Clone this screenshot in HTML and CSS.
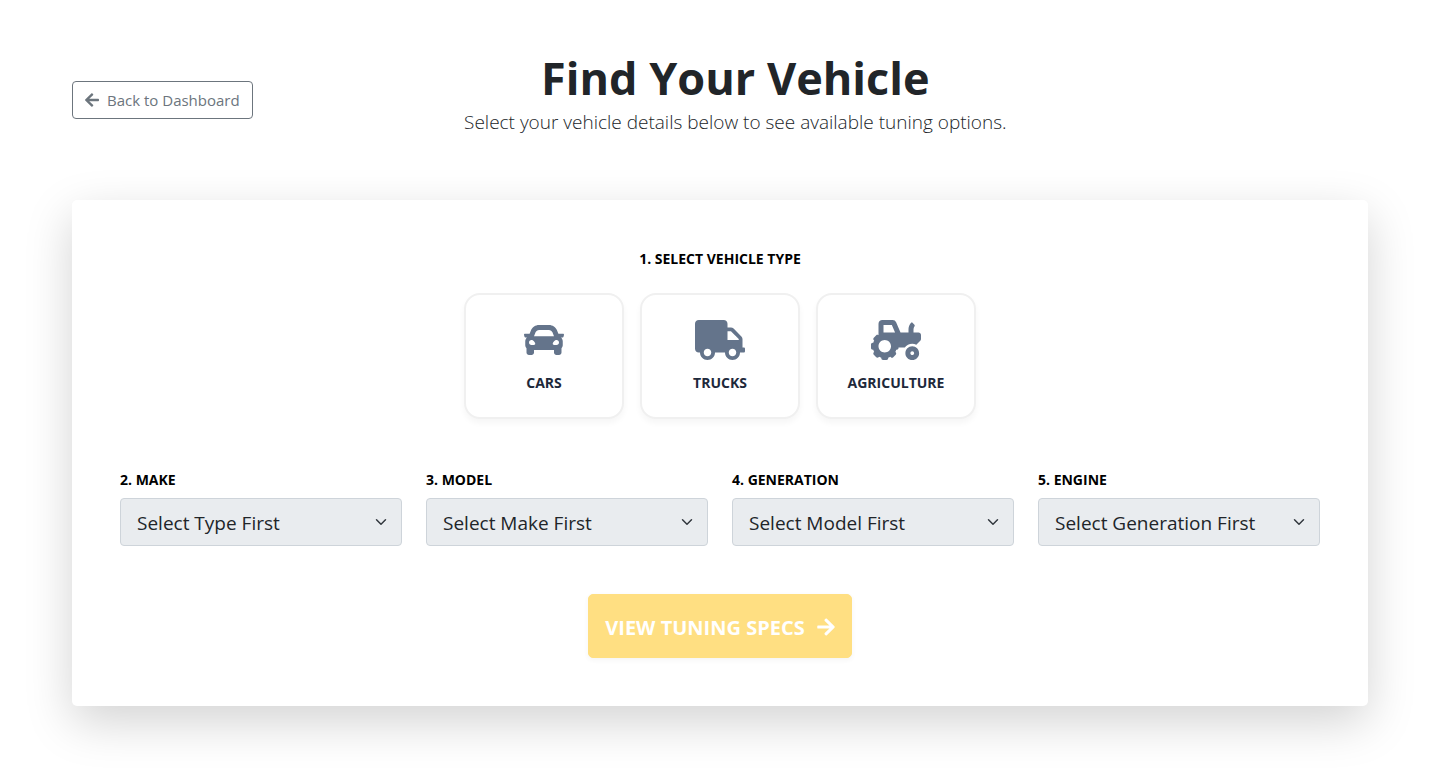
FILE: index.html
```
<!DOCTYPE html>
<html lang="en">
<head>
    <meta charset="UTF-8">
    <title>Find Your Vehicle</title>
    <meta name="viewport" content="width=device-width, initial-scale=1.0">
    <link rel="stylesheet" href="styles.css">
</head>
<body>
    <div class="page">
        <header class="page-header">
            <a href="#" class="btn-back">
                <svg class="icon-back" viewBox="0 0 448 512" aria-hidden="true"><path d="M257.5 445.1l-22.2 22.2c-9.4 9.4-24.6 9.4-33.9 0L7 273c-9.4-9.4-9.4-24.6 0-33.9L201.4 44.7c9.4-9.4 24.6-9.4 33.9 0l22.2 22.2c9.5 9.5 9.3 25-.4 34.3L136.6 216H424c13.3 0 24 10.7 24 24v32c0 13.3-10.7 24-24 24H136.6l120.5 114.8c9.8 9.3 10 24.8.4 34.3z"/></svg>
                Back to Dashboard
            </a>
            <div class="page-title">
                <h1>Find Your Vehicle</h1>
                <p>Select your vehicle details below to see available tuning options.</p>
            </div>
            <div class="header-spacer"></div>
        </header>

        <form class="card">
            <h2 class="form-label type-label">1. Select Vehicle Type</h2>
            <div class="type-list">
                <button type="button" class="type-card">
                    <svg viewBox="0 0 512 512" aria-hidden="true"><path d="M499.99 176h-59.87l-16.64-41.6C406.38 91.63 365.57 64 319.5 64h-127c-46.06 0-86.88 27.63-103.99 70.4L71.87 176H12.01C4.2 176-1.53 183.34.37 190.91l6 24C7.7 220.25 12.5 224 18.01 224h20.07C24.65 235.73 16 252.78 16 272v48c0 16.12 6.16 30.67 16 41.93V416c0 17.67 14.33 32 32 32h32c17.67 0 32-14.33 32-32v-32h256v32c0 17.67 14.33 32 32 32h32c17.67 0 32-14.33 32-32v-54.07c9.84-11.25 16-25.8 16-41.93v-48c0-19.22-8.65-36.27-22.07-48H494c5.51 0 10.31-3.75 11.64-9.09l6-24c1.89-7.57-3.84-14.91-11.65-14.91zm-352.06-17.83c7.29-18.22 24.94-30.17 44.57-30.17h127c19.63 0 37.28 11.95 44.57 30.17L384 208H128l19.93-49.83zM96 319.8c-19.2 0-32-12.76-32-31.9S76.8 256 96 256s48 28.71 48 47.85-28.8 15.95-48 15.95zm320 0c-19.2 0-48 3.19-48-15.95S396.8 256 416 256s32 12.76 32 31.9-12.8 31.9-32 31.9z"/></svg>
                    <span>Cars</span>
                </button>
                <button type="button" class="type-card">
                    <svg viewBox="0 0 640 512" aria-hidden="true"><path d="M624 352h-16V243.9c0-12.7-5.1-24.9-14.1-33.9L494 110.1c-9-9-21.2-14.1-33.9-14.1H416V48c0-26.5-21.5-48-48-48H48C21.5 0 0 21.5 0 48v320c0 26.5 21.5 48 48 48h16c0 53 43 96 96 96s96-43 96-96h128c0 53 43 96 96 96s96-43 96-96h48c8.8 0 16-7.2 16-16v-32c0-8.8-7.2-16-16-16zM160 464c-26.5 0-48-21.5-48-48s21.5-48 48-48 48 21.5 48 48-21.5 48-48 48zm320 0c-26.5 0-48-21.5-48-48s21.5-48 48-48 48 21.5 48 48-21.5 48-48 48zm80-208H416V144h44.1l99.9 99.9V256z"/></svg>
                    <span>Trucks</span>
                </button>
                <button type="button" class="type-card">
                    <svg viewBox="0 0 640 512" aria-hidden="true"><path d="M528 336c-48.6 0-88 39.4-88 88s39.4 88 88 88 88-39.4 88-88-39.4-88-88-88zm0 112c-13.23 0-24-10.77-24-24s10.77-24 24-24 24 10.77 24 24-10.77 24-24 24zm80-288h-64v-40.2c0-14.12 4.7-27.76 13.15-38.84 4.42-5.8 3.55-14.06-1.32-19.49L534.2 37.3c-6.66-7.45-18.32-6.92-24.7.78C490.58 60.9 480 89.81 480 119.8V160H377.67L321.58 29.14A47.914 47.914 0 0 0 277.45 0H144c-26.47 0-48 21.53-48 48v146.52c-8.63-6.73-20.96-6.46-28.89 1.47L36 227.1c-8.59 8.59-8.59 22.52 0 31.11l5.06 5.06c-4.99 9.26-8.96 18.82-11.91 28.72H22c-12.15 0-22 9.85-22 22v44c0 12.15 9.85 22 22 22h7.14c2.96 9.91 6.92 19.46 11.91 28.73l-5.06 5.06c-8.59 8.59-8.59 22.52 0 31.11L67.1 476c8.59 8.59 22.52 8.59 31.11 0l5.06-5.06c9.26 4.99 18.82 8.96 28.72 11.91V490c0 12.15 9.85 22 22 22h44c12.15 0 22-9.85 22-22v-7.14c9.9-2.95 19.46-6.92 28.72-11.91l5.06 5.06c8.59 8.59 22.52 8.59 31.11 0l31.11-31.11c8.59-8.59 8.59-22.52 0-31.11l-5.06-5.06c4.99-9.26 8.96-18.82 11.91-28.72H330c12.15 0 22-9.85 22-22v-6h80.54c21.91-28.99 56.32-48 95.46-48 18.64 0 36.07 4.61 51.8 12.2l50.82-50.82c6-6 9.37-14.14 9.37-22.63V192c.01-17.67-14.32-32-31.99-32zM176 416c-44.18 0-80-35.82-80-80s35.82-80 80-80 80 35.82 80 80-35.82 80-80 80zm22-256h-38V64h106.89l41.15 96H198z"/></svg>
                    <span>Agriculture</span>
                </button>
            </div>

            <div class="field-row">
                <div class="field">
                    <label class="form-label" for="make">2. Make</label>
                    <select id="make" class="form-select" disabled>
                        <option>Select Type First</option>
                    </select>
                </div>
                <div class="field">
                    <label class="form-label" for="model">3. Model</label>
                    <select id="model" class="form-select" disabled>
                        <option>Select Make First</option>
                    </select>
                </div>
                <div class="field">
                    <label class="form-label" for="generation">4. Generation</label>
                    <select id="generation" class="form-select" disabled>
                        <option>Select Model First</option>
                    </select>
                </div>
                <div class="field">
                    <label class="form-label" for="engine">5. Engine</label>
                    <select id="engine" class="form-select" disabled>
                        <option>Select Generation First</option>
                    </select>
                </div>
            </div>

            <button type="submit" class="btn-view" disabled>
                View Tuning Specs
                <svg class="icon-view" viewBox="0 0 448 512" aria-hidden="true"><path d="M190.5 66.9l22.2-22.2c9.4-9.4 24.6-9.4 33.9 0L441 239c9.4 9.4 9.4 24.6 0 33.9L246.6 467.3c-9.4 9.4-24.6 9.4-33.9 0l-22.2-22.2c-9.5-9.5-9.3-25 .4-34.3L311.4 296H24c-13.3 0-24-10.7-24-24v-32c0-13.3 10.7-24 24-24h287.4L190.9 101.2c-9.8-9.3-10-24.8-.4-34.3z"/></svg>
            </button>
        </form>
    </div>
</body>
</html>
```
FILE: styles.css
```
:root {
    --text-dark: #212529;
    --grey: #6c757d;
    --slate: #64748b;
    --navy: #1e293b;
    --yellow: #ffc107;
}

* {
    box-sizing: border-box;
}

body {
    margin: 0;
    min-height: 100vh;
    background-color: #fff;
    color: var(--text-dark);
    font-family: 'Segoe UI', 'Open Sans', 'Noto Sans', sans-serif;
    font-size: 16px;
    line-height: 24px;
}

svg {
    fill: currentColor;
}

.page {
    padding: 48px 5%;
}

/* Header */
.page-header {
    display: flex;
    justify-content: space-between;
    align-items: center;
    margin-bottom: 48px;
}

.btn-back {
    display: flex;
    align-items: center;
    gap: 8px;
    height: 38px;
    padding: 0 12px;
    border: 1px solid var(--grey);
    border-radius: 4px;
    color: var(--grey);
    font-size: 15px;
    text-decoration: none;
}

.icon-back {
    width: 14px;
    height: 16px;
}

.page-title {
    text-align: center;
}

.page-title h1 {
    margin: 0;
    font-size: 45px;
    font-weight: 700;
    line-height: 60px;
}

.page-title p {
    margin: 0 0 16px;
    font-size: 19px;
    font-weight: 300;
    line-height: 28px;
}

.header-spacer {
    width: 150px;
}

/* Form card */
.card {
    padding: 48px;
    background-color: #fff;
    border-radius: 5px;
    box-shadow: 0 16px 48px rgba(0, 0, 0, 0.175);
}

.form-label {
    display: block;
    margin: 0 0 7px;
    color: #000;
    font-size: 14px;
    font-weight: 700;
    line-height: 22px;
    text-transform: uppercase;
}

.type-label {
    margin-bottom: 23px;
    text-align: center;
}

/* Vehicle types */
.type-list {
    display: flex;
    flex-wrap: wrap;
    justify-content: center;
    gap: 16px;
    margin-bottom: 50px;
}

.type-card {
    display: flex;
    flex-direction: column;
    align-items: center;
    gap: 12px;
    width: 160px;
    padding: 25px 16px 23px;
    background-color: #fff;
    border: 2px solid #f0f0f0;
    border-radius: 16px;
    box-shadow: 0 4px 6px rgba(0, 0, 0, 0.04);
    color: var(--navy);
    font-family: inherit;
    font-size: 14px;
    font-weight: 700;
    line-height: 22px;
    text-transform: uppercase;
    cursor: pointer;
}

.type-card svg {
    height: 40px;
    color: var(--slate);
}

/* Selects */
.field-row {
    display: grid;
    grid-template-columns: repeat(4, 1fr);
    gap: 24px;
    margin-bottom: 48px;
}

.form-select {
    display: block;
    width: 100%;
    height: 48px;
    padding: 2px 48px 0 16px;
    appearance: none;
    background-color: #e9ecef;
    background-image: url("data:image/svg+xml,%3csvg xmlns='http://www.w3.org/2000/svg' viewBox='0 0 16 16'%3e%3cpath fill='none' stroke='%23343a40' stroke-linecap='round' stroke-linejoin='round' stroke-width='2' d='M2 5l6 6 6-6'/%3e%3c/svg%3e");
    background-repeat: no-repeat;
    background-position: right 14px center;
    background-size: 12px 12px;
    border: 1px solid #ced4da;
    border-radius: 4px;
    color: var(--text-dark);
    font-family: inherit;
    font-size: 19px;
    opacity: 1;
}

/* Submit */
.btn-view {
    display: flex;
    align-items: center;
    justify-content: center;
    gap: 12px;
    height: 64px;
    margin: 0 auto;
    padding: 2px 16px 0;
    background-color: var(--yellow);
    border: 1px solid var(--yellow);
    border-radius: 5px;
    box-shadow: 0 2px 4px rgba(0, 0, 0, 0.075);
    color: #fff;
    font-family: inherit;
    font-size: 20px;
    font-weight: 700;
    text-transform: uppercase;
    opacity: 0.5;
}

.icon-view {
    width: 18px;
    height: 20px;
}

@media (max-width: 992px) {
    .page-header {
        flex-direction: column;
        gap: 24px;
    }
    .header-spacer {
        display: none;
    }
    .field-row {
        grid-template-columns: 1fr 1fr;
    }
}

@media (max-width: 576px) {
    .card {
        padding: 24px;
    }
    .field-row {
        grid-template-columns: 1fr;
    }
}
```
